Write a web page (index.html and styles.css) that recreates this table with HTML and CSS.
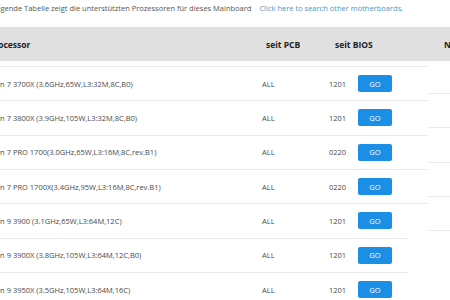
FILE: index.html
```html
<!DOCTYPE html>
<html lang="de">
<head>
  <meta charset="UTF-8" />
  <title>Prozessoren</title>
  <link rel="stylesheet" href="styles.css">
</head>
<body>
  <div class="page">
    <p class="intro">
      Die folgende Tabelle zeigt die unterstützten Prozessoren für dieses Mainboard
      <a href="#" class="search">Click here to search other motherboards.</a>
    </p>

    <div class="head">
      <div class="cell name">Processor</div>
      <div class="cell pcb">seit PCB</div>
      <div class="cell bios">seit BIOS</div>
      <div class="cell note">Notes</div>
    </div>

    <div class="body">
      <div class="rows">
        <div class="row">
          <div class="cell name">Ryzen 7 3700X (3.6GHz,65W,L3:32M,8C,B0)</div>
          <div class="cell pcb">ALL</div>
          <div class="cell bios">1201</div>
          <div class="cell"><button class="go">GO</button></div>
        </div>
        <div class="row">
          <div class="cell name">Ryzen 7 3800X (3.9GHz,105W,L3:32M,8C,B0)</div>
          <div class="cell pcb">ALL</div>
          <div class="cell bios">1201</div>
          <div class="cell"><button class="go">GO</button></div>
        </div>
        <div class="row">
          <div class="cell name">Ryzen 7 PRO 1700(3.0GHz,65W,L3:16M,8C,rev.B1)</div>
          <div class="cell pcb">ALL</div>
          <div class="cell bios">0220</div>
          <div class="cell"><button class="go">GO</button></div>
        </div>
        <div class="row">
          <div class="cell name">Ryzen 7 PRO 1700X(3.4GHz,95W,L3:16M,8C,rev.B1)</div>
          <div class="cell pcb">ALL</div>
          <div class="cell bios">0220</div>
          <div class="cell"><button class="go">GO</button></div>
        </div>
        <div class="row short">
          <div class="cell name">Ryzen 9 3900 (3.1GHz,65W,L3:64M,12C)</div>
          <div class="cell pcb">ALL</div>
          <div class="cell bios">1201</div>
          <div class="cell"><button class="go">GO</button></div>
        </div>
        <div class="row short">
          <div class="cell name">Ryzen 9 3900X (3.8GHz,105W,L3:64M,12C,B0)</div>
          <div class="cell pcb">ALL</div>
          <div class="cell bios">1201</div>
          <div class="cell"><button class="go">GO</button></div>
        </div>
        <div class="row short">
          <div class="cell name">Ryzen 9 3950X (3.5GHz,105W,L3:64M,16C)</div>
          <div class="cell pcb">ALL</div>
          <div class="cell bios">1201</div>
          <div class="cell"><button class="go">GO</button></div>
        </div>
      </div>

      <div class="side">
        <div class="side-cell first"></div>
        <div class="side-cell"></div>
        <div class="side-cell"></div>
        <div class="side-cell"></div>
        <div class="side-cell"></div>
      </div>
    </div>
  </div>
</body>
</html>
```

FILE: styles.css
```css
body {
  margin: 0;
  background: #fff;
  font-family: "Open Sans", "Noto Sans", sans-serif;
  color: #4a4a4a;
  overflow: hidden;
}

.page {
  margin-left: -28px;
  width: 520px;
}

.intro {
  margin: 0;
  padding: 2px 0 0 6px;
  height: 25px;
  font-size: 7.5px;
  line-height: 12px;
  color: #555;
  white-space: nowrap;
}

.search {
  margin-left: 6px;
  color: #3f9ccb;
  text-decoration: none;
}

.head {
  display: grid;
  grid-template-columns: 292px 69px 100px 1fr;
  align-items: center;
  height: 34px;
  background: #e0e0e0;
  font-size: 8.5px;
  font-weight: 700;
  color: #222;
}

.head .name {
  padding-left: 17px;
}

.head .pcb {
  padding-left: 2px;
}

.head .bios {
  padding-left: 2px;
}

.head .note {
  padding-left: 11px;
}

.body {
  display: flex;
  margin-top: 5px;
}

.rows {
  width: 456px;
  border-top: 1px solid #e8e8e8;
}

.row {
  display: grid;
  grid-template-columns: 290px 67px 29px 40px;
  align-items: center;
  height: 33.33px;
  border-bottom: 1px solid #e8e8e8;
  font-size: 7.5px;
}

.row.short {
  width: 436px;
}

.row .name {
  padding-left: 12px;
  white-space: nowrap;
}

.go {
  width: 34px;
  height: 17px;
  padding: 0;
  border: none;
  border-radius: 2px;
  background: #1b8fe6;
  color: #fff;
  font-family: inherit;
  font-size: 7.5px;
}

.side {
  flex: 1;
}

.side-cell {
  height: 33.25px;
  border-bottom: 1px solid #e8e8e8;
}

.side-cell.first {
  height: 27px;
}
```
